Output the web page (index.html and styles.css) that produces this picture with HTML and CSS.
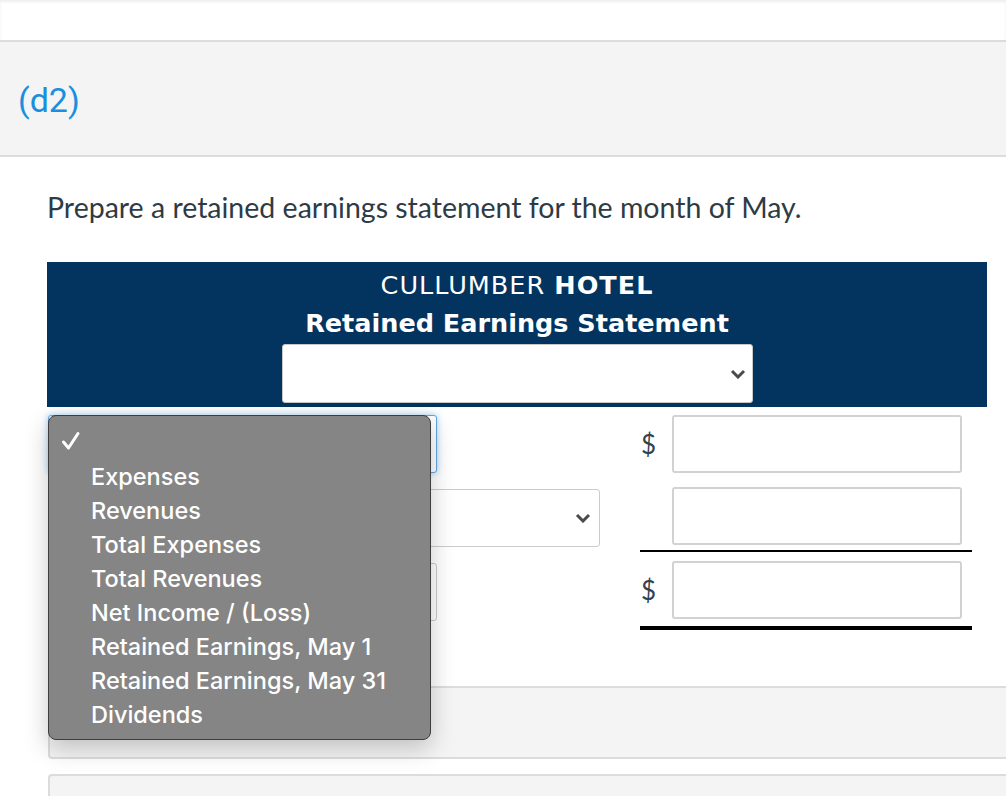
FILE: index.html
```html
<!DOCTYPE html>
<html lang="en">
<head>
<meta charset="utf-8">
<title>Retained Earnings Statement</title>
<link rel="stylesheet" href="styles.css">
</head>
<body>
<div class="page">
  <div class="topbar"></div>
  <div class="part"><span class="part-label">(d2)</span></div>
  <div class="content">
    <p class="question">Prepare a retained earnings statement for the month of May.</p>
    <div class="stmt-head">
      <div class="title">CULLUMBER <b>HOTEL</b></div>
      <div class="title bold">Retained Earnings Statement</div>
      <div class="select head-select">
        <svg class="chev" viewBox="0 0 16 10" width="16" height="10"><path d="M2 2 L8 8 L14 2"/></svg>
      </div>
    </div>
    <div class="rows">
      <div class="row r1">
        <div class="left"><div class="select s1 focus"></div></div>
        <div class="right"><span class="dollar">$</span><div class="input"></div></div>
      </div>
      <div class="row r2">
        <div class="left"><div class="select s2">
          <svg class="chev" viewBox="0 0 16 10" width="16" height="10"><path d="M2 2 L8 8 L14 2"/></svg>
        </div></div>
        <div class="right line-thin"><span class="dollar"></span><div class="input"></div></div>
      </div>
      <div class="row r3">
        <div class="left"><div class="select s3"></div></div>
        <div class="right line-thick"><span class="dollar">$</span><div class="input"></div></div>
      </div>
    </div>
  </div>
  <div class="panel p1"></div>
  <div class="panel p2"></div>

  <div class="menu">
    <div class="menu-check">
      <svg viewBox="0 0 20 20" width="20" height="20"><path d="M2.5 11 L7.5 17 L17 2.5"/></svg>
    </div>
    <div class="menu-item">Expenses</div>
    <div class="menu-item">Revenues</div>
    <div class="menu-item">Total Expenses</div>
    <div class="menu-item">Total Revenues</div>
    <div class="menu-item">Net Income / (Loss)</div>
    <div class="menu-item">Retained Earnings, May 1</div>
    <div class="menu-item">Retained Earnings, May 31</div>
    <div class="menu-item">Dividends</div>
  </div>
</div>
</body>
</html>
```

FILE: styles.css
```css
html, body {
  margin: 0;
  padding: 0;
  background: #ffffff;
}
body {
  font-family: Lato, "Open Sans", sans-serif;
  color: #2d3b45;
  overflow: hidden;
}
.page {
  position: relative;
  width: 1006px;
  height: 796px;
  overflow: hidden;
}
.topbar {
  height: 40px;
  background: #ffffff;
  box-shadow: inset 0 2px 3px rgba(0, 0, 0, 0.07);
}
.part {
  height: 113px;
  background: #f4f4f4;
  border-top: 2px solid #dcdcdc;
  border-bottom: 2px solid #dcdcdc;
  display: flex;
  align-items: center;
  padding-left: 18px;
}
.part-label {
  color: #1a8fdd;
  font-size: 34px;
  font-family: Roboto, Lato, sans-serif;
  margin-top: 2px;
}
.content {
  padding-left: 47px;
  width: 940px;
}
.question {
  margin: 33px 0 0 0;
  font-size: 28.5px;
  line-height: 34px;
  height: 34px;
}
.stmt-head {
  margin-top: 38px;
  background: #02345f;
  height: 145px;
  box-sizing: border-box;
  padding-top: 4px;
  display: flex;
  flex-direction: column;
  align-items: center;
  color: #ffffff;
  font-family: "DejaVu Sans", Verdana, sans-serif;
}
.title {
  font-size: 25.5px;
  line-height: 38px;
  letter-spacing: 1px;
}
.title.bold {
  font-size: 25.5px;
  letter-spacing: 0;
}
.title.bold, .title b {
  font-weight: 700;
}
.select {
  background: #ffffff;
  border: 1px solid #cccccc;
  border-radius: 3px;
  box-sizing: border-box;
  height: 58px;
  display: flex;
  align-items: center;
  justify-content: flex-end;
  padding-right: 8px;
}
.head-select {
  width: 471px;
  height: 59px;
  margin-top: 2px;
  border-color: #c8c8c8;
  padding-right: 6px;
}
.chev path {
  fill: none;
  stroke: #4a4a4a;
  stroke-width: 3;
}
.rows {
  margin-top: 8px;
}
.row {
  display: grid;
  grid-template-columns: 593px 332px;
  align-items: start;
}
.r2 { margin-top: 14px; }
.r3 { margin-top: 9px; }
.left {
  display: flex;
}
.s1 {
  width: 389px;
  margin-left: 1px;
}
.s1.focus {
  border-color: #63a6e2;
  box-shadow: 0 0 6px rgba(82, 168, 236, 0.55);
}
.s2 {
  margin-left: 200px;
  width: 353px;
  margin-top: 2px;
}
.s3 {
  width: 389px;
  margin-left: 1px;
  margin-top: 2px;
}
.right {
  display: flex;
  align-items: center;
}
.dollar {
  width: 32px;
  box-sizing: border-box;
  padding-left: 1px;
  font-size: 26px;
  color: #34424d;
}
.input {
  width: 290px;
  height: 58px;
  box-sizing: border-box;
  border: 2px solid #d2d2d2;
  border-radius: 3px;
  background: #ffffff;
}
.line-thin {
  border-bottom: 2px solid #000000;
  padding-bottom: 5px;
}
.line-thick {
  border-bottom: 4px solid #000000;
  padding-bottom: 7px;
}
.panel {
  margin-left: 48px;
  width: 1000px;
  background: #f4f4f4;
  border: 2px solid #dcdcdc;
  border-right: none;
}
.p1 {
  margin-top: 56px;
  height: 69px;
  border-radius: 0 0 0 4px;
}
.p2 {
  margin-top: 15px;
  height: 40px;
  border-radius: 4px 0 0 0;
}
.menu {
  position: absolute;
  left: 48px;
  top: 415px;
  width: 383px;
  height: 325px;
  box-sizing: border-box;
  background: #858585;
  border: 1px solid #3e3e3e;
  border-radius: 8px;
  box-shadow: 0 8px 24px rgba(0, 0, 0, 0.22);
  padding-top: 15px;
  font-family: Inter, "Noto Sans", sans-serif;
  color: #ffffff;
}
.menu-check {
  height: 29px;
  padding-left: 12px;
}
.menu-check path {
  fill: none;
  stroke: #ffffff;
  stroke-width: 3;
  stroke-linecap: round;
  stroke-linejoin: round;
}
.menu-item {
  padding-left: 42px;
  font-size: 23.5px;
  font-weight: 500;
  line-height: 34px;
  height: 34px;
}
```
